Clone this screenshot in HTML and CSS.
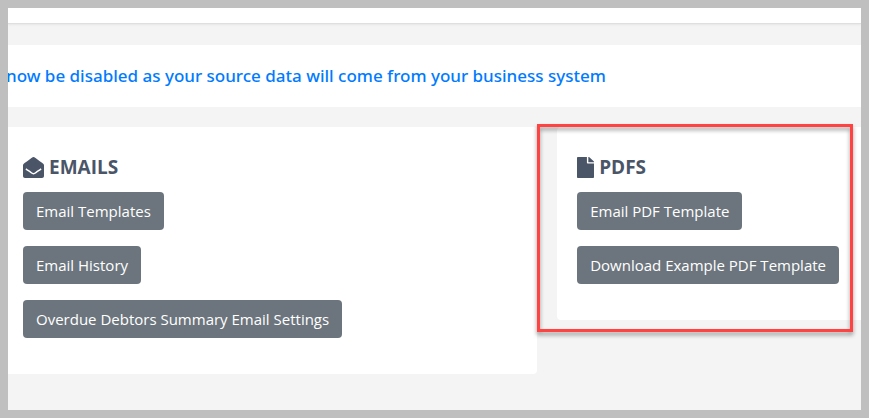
FILE: index.html
```html
<!DOCTYPE html>
<html lang="en">
<head>
    <meta charset="UTF-8">
    <meta name="viewport" content="width=device-width, initial-scale=1.0">
    <title>Templates</title>
    <link rel="stylesheet" href="styles.css">
</head>
<body>
    <header class="topbar"></header>
    <main>
        <div class="notice">
            <p>now be disabled as your source data will come from your business system</p>
        </div>
        <div class="cards">
            <section class="card card-emails">
                <h2>
                    <svg class="icon" width="21" height="21" viewBox="0 0 512 512" aria-hidden="true">
                        <path d="M512 464c0 26.510-21.490 48-48 48H48c-26.510 0-48-21.490-48-48V200.724a48 48 0 0 1 18.387-37.776c24.913-19.529 45.501-35.365 164.200-121.511C199.412 29.170 232.797-.347 256 .003c23.198-.354 56.596 29.172 73.413 41.433 118.687 86.137 139.303 101.995 164.200 121.512A48 48 0 0 1 512 200.724V464z"/>
                        <path class="flap" d="M70 288C110 318 150 345 190 374C213 391 234 406 256 406S299 391 322 374C362 345 402 318 442 288"/>
                    </svg>
                    EMAILS
                </h2>
                <button type="button" class="btn">Email Templates</button>
                <button type="button" class="btn">Email History</button>
                <button type="button" class="btn">Overdue Debtors Summary Email Settings</button>
            </section>
            <section class="card card-pdfs">
                <h2>
                    <svg class="icon" width="17" height="21" viewBox="0 0 384 512" preserveAspectRatio="none" aria-hidden="true">
                        <path d="M224 136V0H24C10.700 0 0 10.700 0 24v464c0 13.300 10.700 24 24 24h336c13.300 0 24-10.700 24-24V160H248c-13.200 0-24-10.800-24-24zm160-14.100v6.100H256V0h6.100c6.400 0 12.500 2.500 17 7l97.900 98c4.500 4.500 7 10.600 7 16.900z"/>
                    </svg>
                    PDFS
                </h2>
                <button type="button" class="btn">Email PDF Template</button>
                <button type="button" class="btn">Download Example PDF Template</button>
                <div class="highlight"></div>
            </section>
        </div>
    </main>
</body>
</html>
```

FILE: styles.css
```css
* {
    box-sizing: border-box;
}
body {
    margin: 0;
    min-height: 100vh;
    border: 8px solid #bfbfbf;
    background-color: #f4f4f4;
    font-family: "Segoe UI", "Open Sans", "Noto Sans", sans-serif;
    font-size: 15px;
    color: #4a5568;
}
.topbar {
    height: 16px;
    background-color: white;
    border-bottom: 1px solid #dfdfdf;
    box-shadow: 0 1px 2px rgba(0, 0, 0, 0.06);
}
.notice {
    margin: 21px 0 20px;
    padding: 19px 0;
    background-color: white;
    overflow: hidden;
}
.notice p {
    margin: 0 -2px;
    font-family: "Segoe UI", "Noto Sans", "Open Sans", sans-serif;
    font-size: 17px;
    font-weight: 500;
    line-height: 24px;
    color: #007bff;
    white-space: nowrap;
}
.cards {
    display: grid;
    grid-template-columns: minmax(0, 54fr) minmax(0, 31fr);
    gap: 20px;
    align-items: start;
}
.card {
    position: relative;
    display: flex;
    flex-direction: column;
    align-items: flex-start;
    gap: 16px;
    padding: 28px 15px 36px;
    background-color: white;
}
.card-emails {
    border-radius: 0 4px 4px 0;
}
.card-pdfs {
    padding-left: 20px;
    border-radius: 4px 0 0 4px;
}
.card h2 {
    display: flex;
    align-items: center;
    gap: 5px;
    margin: 0 0 -3px;
    font-size: 19px;
    font-weight: 700;
    line-height: 24px;
}
.icon {
    fill: currentColor;
}
.flap {
    fill: none;
    stroke: white;
    stroke-width: 36px;
}
.btn {
    height: 38px;
    padding: 0 13px;
    border: none;
    border-radius: 4px;
    background-color: #6c757d;
    color: white;
    font-family: inherit;
    font-size: 15px;
    line-height: 24px;
    white-space: nowrap;
    cursor: pointer;
}
.btn:hover {
    background-color: #5a6268;
}
/* red frame drawn around the PDFs card */
.highlight {
    position: absolute;
    top: -3px;
    right: 8px;
    bottom: -12px;
    left: -20px;
    border: 3px solid #ff4343;
    filter: drop-shadow(0 3px 2px rgba(0, 0, 0, 0.4));
    pointer-events: none;
}
```
